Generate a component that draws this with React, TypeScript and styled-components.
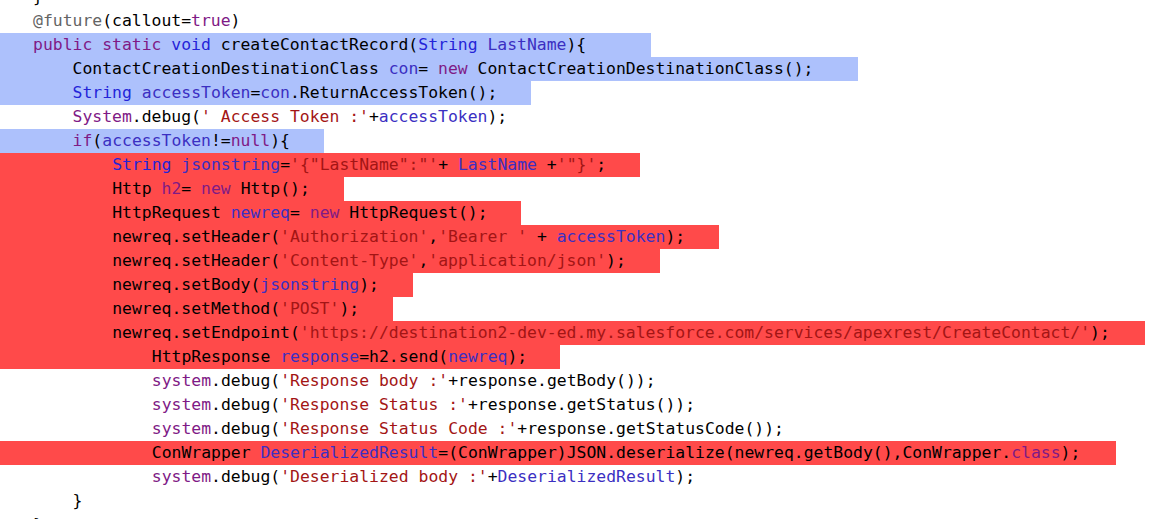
import React from "react";
import styled, { createGlobalStyle } from "styled-components";

const Global = createGlobalStyle`
  html, body { margin: 0; padding: 0; background: #ffffff; }
  body { overflow: hidden; }
`;

type Kind = "t" | "kw" | "ty" | "v" | "s" | "an";
type Tok = [Kind, string];
type Line = { indent: number; hl?: "blue" | "red"; w?: number; toks: Tok[] };

const colors: Record<Kind, string> = {
  t: "#000000",
  kw: "#7f1a86",
  ty: "#2424d8",
  v: "#3b2fc2",
  s: "#a31515",
  an: "#646464",
};

const hlColors = { blue: "#adc1fc", red: "#ff4a4a" };

const Editor = styled.div`
  margin-top: -15px;
  font-family: "DejaVu Sans Mono", "Liberation Mono", monospace;
  font-size: 16.42px;
  line-height: 24px;
  color: #000;
`;

const Row = styled.div<{ $bg?: string; $w?: number; $indent: number }>`
  height: 24px;
  white-space: pre;
  box-sizing: border-box;
  padding-left: ${(p) => 33 + p.$indent * 9.9}px;
  background: ${(p) => p.$bg ?? "transparent"};
  width: ${(p) => (p.$w ? `${p.$w}px` : "auto")};
`;

const Span = styled.span<{ $k: Kind }>`
  color: ${(p) => colors[p.$k]};
`;

const lines: Line[] = [
  { indent: 0, toks: [["t", "}"]] },
  { indent: 0, toks: [["an", "@future"], ["t", "(callout="], ["kw", "true"], ["t", ")"]] },
  {
    indent: 0, hl: "blue", w: 651,
    toks: [["kw", "public static "], ["ty", "void"], ["t", " createContactRecord("], ["ty", "String"], ["t", " "], ["v", "LastName"], ["t", "){"]],
  },
  {
    indent: 4, hl: "blue", w: 858,
    toks: [["t", "ContactCreationDestinationClass "], ["v", "con"], ["t", "= "], ["kw", "new"], ["t", " ContactCreationDestinationClass();"]],
  },
  {
    indent: 4, hl: "blue", w: 531,
    toks: [["ty", "String"], ["t", " "], ["v", "accessToken"], ["t", "="], ["v", "con"], ["t", ".ReturnAccessToken();"]],
  },
  {
    indent: 4,
    toks: [["kw", "System"], ["t", ".debug("], ["s", "' Access Token :'"], ["t", "+"], ["v", "accessToken"], ["t", ");"]],
  },
  {
    indent: 4, hl: "blue", w: 324,
    toks: [["kw", "if"], ["t", "("], ["v", "accessToken"], ["t", "!="], ["kw", "null"], ["t", "){"]],
  },
  {
    indent: 8, hl: "red", w: 640,
    toks: [["ty", "String"], ["t", " "], ["v", "jsonstring"], ["t", "="], ["s", "'{\"LastName\":\"'"], ["t", "+ "], ["v", "LastName"], ["t", " +"], ["s", "'\"}'"], ["t", ";"]],
  },
  {
    indent: 8, hl: "red", w: 344,
    toks: [["t", "Http "], ["kw", "h2"], ["t", "= "], ["kw", "new"], ["t", " Http();"]],
  },
  {
    indent: 8, hl: "red", w: 521,
    toks: [["t", "HttpRequest "], ["v", "newreq"], ["t", "= "], ["kw", "new"], ["t", " HttpRequest();"]],
  },
  {
    indent: 8, hl: "red", w: 719,
    toks: [["t", "newreq.setHeader("], ["s", "'Authorization'"], ["t", ","], ["s", "'Bearer '"], ["t", " + "], ["v", "accessToken"], ["t", ");"]],
  },
  {
    indent: 8, hl: "red", w: 660,
    toks: [["t", "newreq.setHeader("], ["s", "'Content-Type'"], ["t", ","], ["s", "'application/json'"], ["t", ");"]],
  },
  {
    indent: 8, hl: "red", w: 413,
    toks: [["t", "newreq.setBody("], ["v", "jsonstring"], ["t", ");"]],
  },
  {
    indent: 8, hl: "red", w: 393,
    toks: [["t", "newreq.setMethod("], ["s", "'POST'"], ["t", ");"]],
  },
  {
    indent: 8, hl: "red", w: 1145,
    toks: [["t", "newreq.setEndpoint("], ["s", "'https://destination2-dev-ed.my.salesforce.com/services/apexrest/CreateContact/'"], ["t", ");"]],
  },
  {
    indent: 12, hl: "red", w: 560,
    toks: [["t", "HttpResponse "], ["v", "response"], ["t", "=h2.send("], ["v", "newreq"], ["t", ");"]],
  },
  {
    indent: 12,
    toks: [["kw", "system"], ["t", ".debug("], ["s", "'Response body :'"], ["t", "+response.getBody());"]],
  },
  {
    indent: 12,
    toks: [["kw", "system"], ["t", ".debug("], ["s", "'Response Status :'"], ["t", "+response.getStatus());"]],
  },
  {
    indent: 12,
    toks: [["kw", "system"], ["t", ".debug("], ["s", "'Response Status Code :'"], ["t", "+response.getStatusCode());"]],
  },
  {
    indent: 12, hl: "red", w: 1116,
    toks: [["t", "ConWrapper "], ["v", "DeserializedResult"], ["t", "=(ConWrapper)JSON.deserialize(newreq.getBody(),ConWrapper."], ["kw", "class"], ["t", ");"]],
  },
  {
    indent: 12,
    toks: [["kw", "system"], ["t", ".debug("], ["s", "'Deserialized body :'"], ["t", "+"], ["v", "DeserializedResult"], ["t", ");"]],
  },
  { indent: 4, toks: [["t", "}"]] },
  { indent: 0, toks: [["t", "}"]] },
];

export default function App() {
  return (
    <>
      <Global />
      <Editor>
        {lines.map((l, i) => (
          <Row key={i} $indent={l.indent} $bg={l.hl ? hlColors[l.hl] : undefined} $w={l.w}>
            {l.toks.map(([k, s], j) => (
              <Span key={j} $k={k}>
                {s}
              </Span>
            ))}
          </Row>
        ))}
      </Editor>
    </>
  );
}
